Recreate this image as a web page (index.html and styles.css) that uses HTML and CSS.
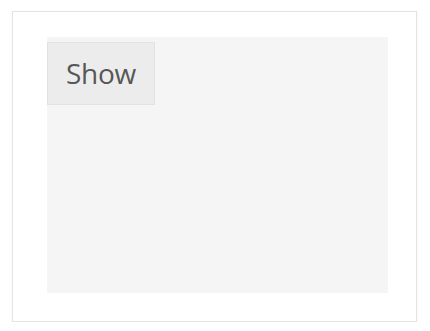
FILE: index.html
```html
<!DOCTYPE html>
<html>
<head>
<meta charset="utf-8">
<link rel="stylesheet" href="styles.css">
</head>
<body>
<div class="frame">
  <div class="stage">
    <button class="show-btn" type="button">Show</button>
  </div>
</div>
</body>
</html>
```
FILE: styles.css
```css
html, body {
  margin: 0;
  padding: 0;
  background: #ffffff;
}
.frame {
  box-sizing: border-box;
  margin: 11px 0 0 12px;
  width: 405px;
  height: 311px;
  border: 1px solid #e4e4e4;
  box-shadow: 0 1px 2px rgba(0,0,0,0.06);
  padding: 25px 0 0 34px;
  background: #ffffff;
}
.stage {
  width: 341px;
  height: 256px;
  background: #f5f5f5;
  padding-top: 5px;
  box-sizing: border-box;
}
.show-btn {
  box-sizing: border-box;
  display: block;
  width: 108px;
  height: 63px;
  margin: 0;
  padding: 0 0 2px 0;
  background: #ececec;
  border: 1px solid #e2e2e2;
  border-radius: 0;
  font-family: "Open Sans", "Noto Sans", sans-serif;
  font-size: 28px;
  color: #575757;
  letter-spacing: -0.3px;
  text-align: center;
}
```
